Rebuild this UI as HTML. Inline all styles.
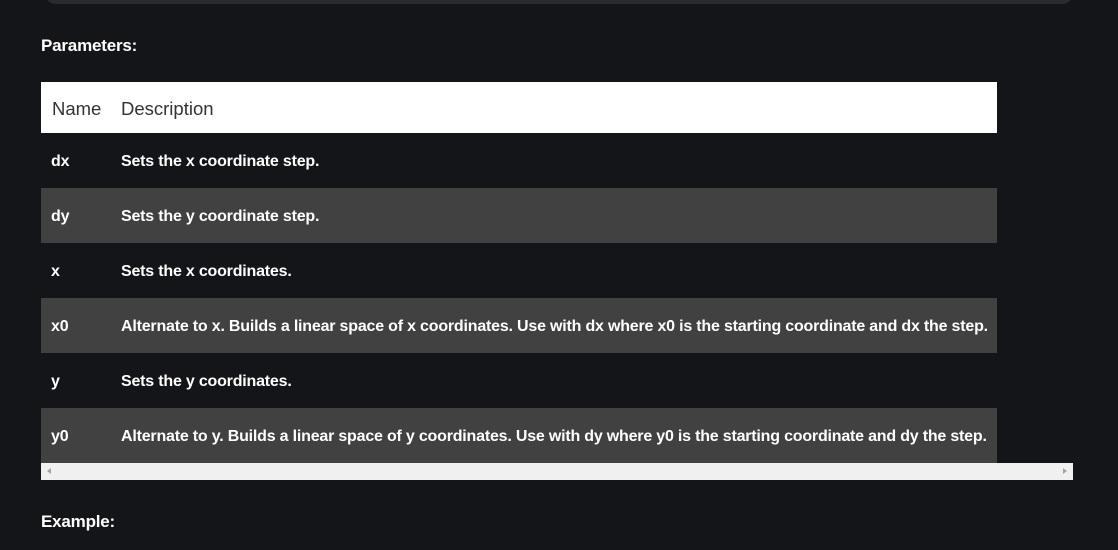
<!DOCTYPE html>
<html><head><meta charset="utf-8"><style>
html,body{margin:0;padding:0;background:#141518;width:1118px;height:550px;overflow:hidden;font-family:"Liberation Sans",sans-serif;color:#fff}
.top{position:absolute;left:44px;top:-20px;width:1030px;height:24px;background:#2a2b2f;border-radius:0 0 12px 12px}
h4{position:absolute;left:41px;margin:0;font-size:17px;font-weight:bold;letter-spacing:-0.2px}
.tbl{position:absolute;left:41px;top:82px;width:956px}
.row{height:55px;display:flex;align-items:center;font-size:16px;font-weight:bold;letter-spacing:-0.2px;white-space:nowrap}
.row>div{padding-top:3px}
.row .n{width:80px;padding-left:10px;box-sizing:border-box}
.row.g{background:#414141}
.hd{height:51px;background:#fff;color:#333;display:flex;align-items:center;font-size:18.5px}
.hd>div{padding-top:3px}
.hd .n{width:80px;padding-left:11px;box-sizing:border-box}
.sb{position:absolute;left:41px;top:463px;width:1032px;height:17px;background:#f0f0f0}
.sb .l{position:absolute;left:6px;top:5px;border:3px solid transparent;border-right:4px solid #a3a3a3;border-left:0}
.sb .r{position:absolute;right:6px;top:5px;border:3px solid transparent;border-left:4px solid #a3a3a3;border-right:0}
</style></head><body>
<div class="top"></div>
<h4 style="top:36px">Parameters:</h4>
<div class="tbl">
<div class="hd"><div class="n">Name</div><div>Description</div></div>
<div class="row"><div class="n">dx</div><div>Sets the x coordinate step.</div></div>
<div class="row g"><div class="n">dy</div><div>Sets the y coordinate step.</div></div>
<div class="row"><div class="n">x</div><div>Sets the x coordinates.</div></div>
<div class="row g"><div class="n">x0</div><div>Alternate to x. Builds a linear space of x coordinates. Use with dx where x0 is the starting coordinate and dx the step.</div></div>
<div class="row"><div class="n">y</div><div>Sets the y coordinates.</div></div>
<div class="row g"><div class="n">y0</div><div>Alternate to y. Builds a linear space of y coordinates. Use with dy where y0 is the starting coordinate and dy the step.</div></div>
</div>
<div class="sb"><div class="l"></div><div class="r"></div></div>
<h4 style="top:512px">Example:</h4>
</body></html>
